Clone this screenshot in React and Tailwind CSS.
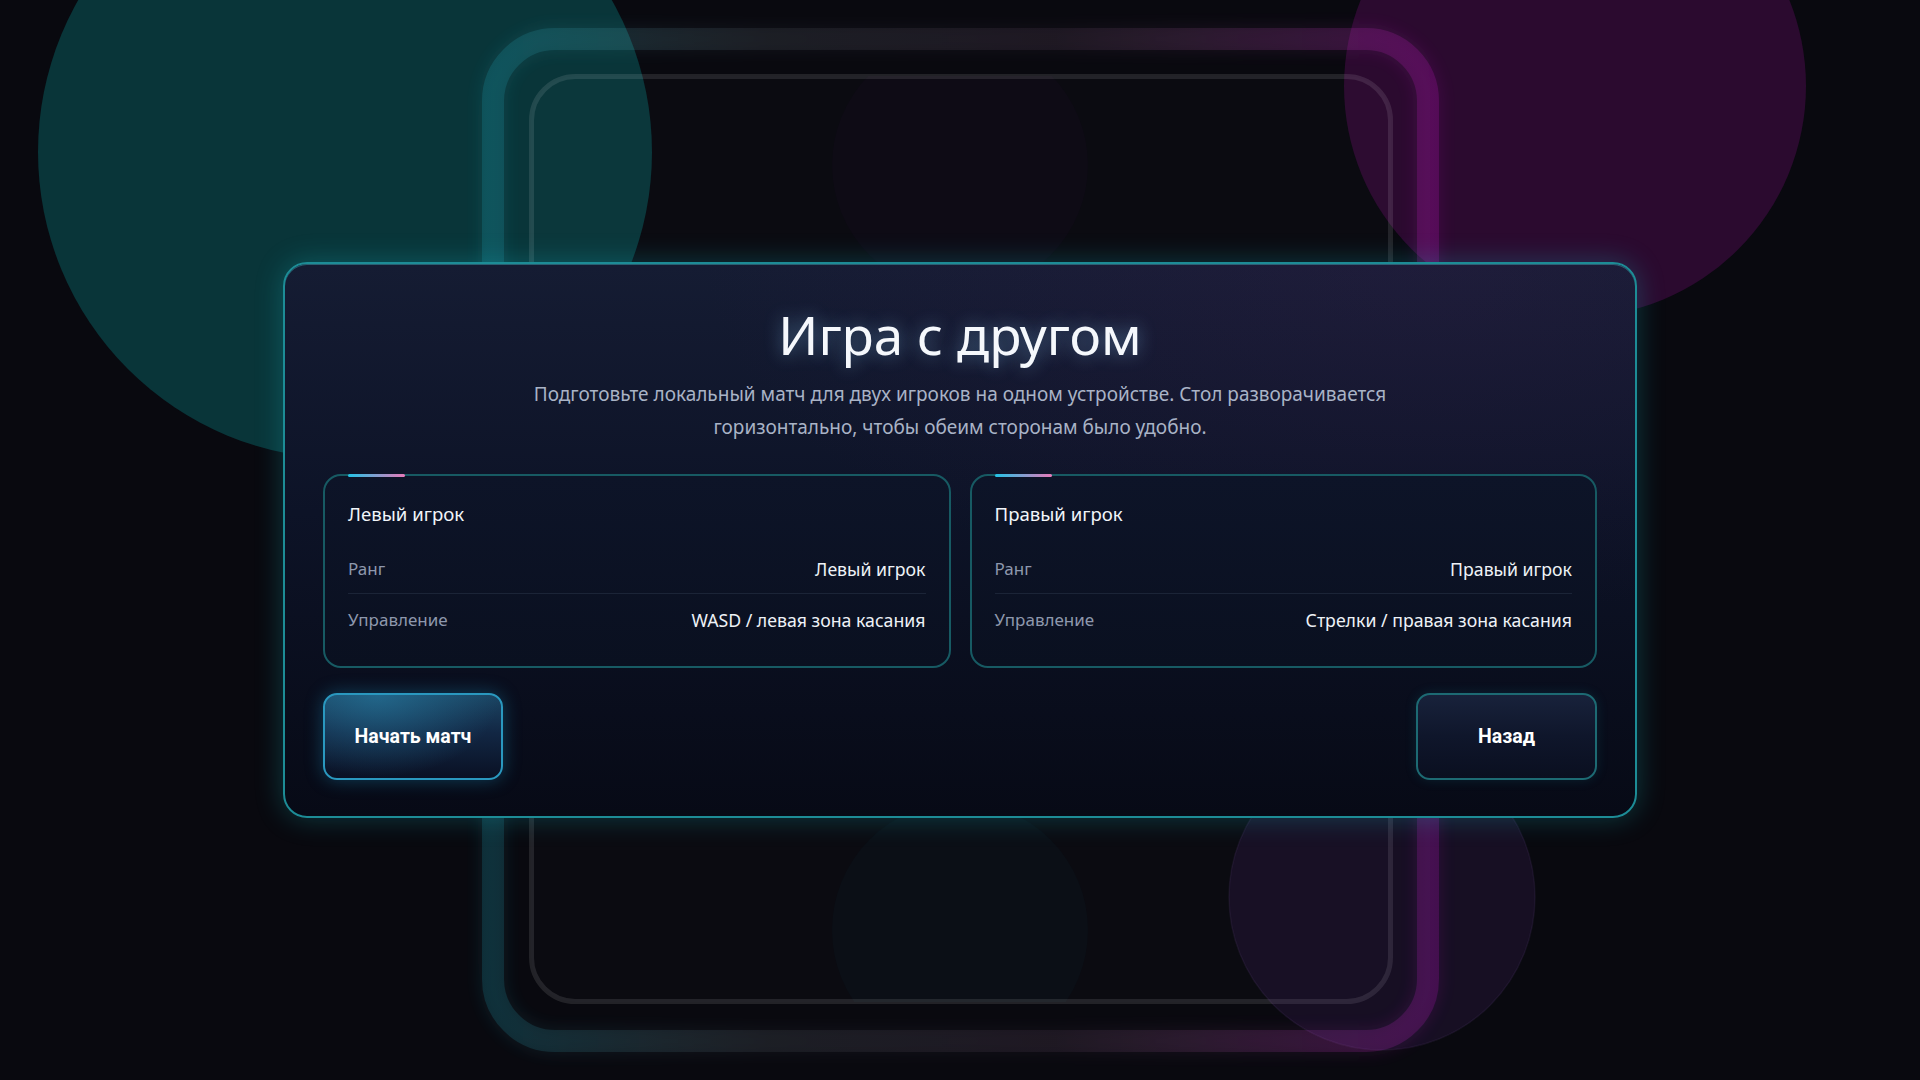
import React from "react";

function Backdrop() {
  return (
    <svg
      className="absolute inset-0 pointer-events-none"
      width="1920"
      height="1080"
      viewBox="0 0 1920 1080"
    >
      <defs>
        <linearGradient id="band" x1="482" y1="0" x2="1439" y2="0" gradientUnits="userSpaceOnUse">
          <stop offset="0" stopColor="rgb(34,211,238)" stopOpacity="0.14" />
          <stop offset="0.3" stopColor="rgb(200,220,230)" stopOpacity="0.07" />
          <stop offset="0.6" stopColor="rgb(220,160,210)" stopOpacity="0.07" />
          <stop offset="1" stopColor="rgb(200,20,200)" stopOpacity="0.2" />
        </linearGradient>
        <filter id="blur8" x="-20%" y="-20%" width="140%" height="140%">
          <feGaussianBlur stdDeviation="7" />
        </filter>
        <clipPath id="field">
          <rect x="531" y="76" width="860" height="926" rx="44" />
        </clipPath>
      </defs>

      <circle cx="345" cy="152" r="307" fill="#093539" />
      <circle cx="1575" cy="86" r="231" fill="#2b0a2f" />

      <rect x="493" y="39" width="935" height="1002" rx="62" fill="none" stroke="url(#band)" strokeWidth="30" filter="url(#blur8)" opacity="0.5" />
      <rect x="493" y="39" width="935" height="1002" rx="62" fill="none" stroke="url(#band)" strokeWidth="22" />

      <g clipPath="url(#field)">
        <rect x="531" y="76" width="860" height="926" fill="rgba(255,255,255,0.012)" />
        <circle cx="960" cy="165" r="128" fill="rgba(217,70,239,0.018)" />
        <circle cx="960" cy="930" r="128" fill="rgba(34,211,238,0.025)" />
      </g>
      <rect x="531.5" y="76.5" width="859" height="925" rx="44" fill="none" stroke="rgba(255,255,255,0.1)" strokeWidth="5" />

      <circle cx="1382" cy="897" r="153" fill="rgba(150,70,220,0.1)" stroke="rgba(200,140,255,0.07)" strokeWidth="1.5" />
    </svg>
  );
}

function PlayerCard({ title, rank, controls }) {
  return (
    <div className="relative flex-1 rounded-[18px] border-2 border-[#175a63] bg-[linear-gradient(180deg,#0d1428_0%,#0a1020_100%)] px-[23px] pt-[24px] pb-[22px]">
      <div className="absolute -top-[2px] left-[23px] h-[3px] w-[57px] rounded-full bg-[linear-gradient(90deg,#22c3e6,#e879b9)]" />
      <div className="text-[18.6px] leading-[28px] text-[#f1f5f9]">{title}</div>
      <div className="mt-[29px] flex flex-col gap-[14px]">
        <div className="flex items-center justify-between border-b border-[#1b2437] pb-[12px] leading-[24px]">
          <span className="text-[17px] text-[#8e98ad]">Ранг</span>
          <span className="text-[17.7px] text-[#eef2f7]">{rank}</span>
        </div>
        <div className="flex items-center justify-between pb-[12px] leading-[24px]">
          <span className="text-[17px] text-[#8e98ad]">Управление</span>
          <span className="text-[17.7px] text-[#eef2f7]">{controls}</span>
        </div>
      </div>
    </div>
  );
}

export default function App() {
  return (
    <div
      className="relative h-[1080px] w-[1920px] overflow-hidden bg-[#09090f]"
      style={{ fontFamily: '"Noto Sans", "Open Sans", sans-serif' }}
    >
      <Backdrop />
      <div className="relative z-10 flex h-full items-center justify-center">
        <div className="w-[1354px] rounded-[24px] border-2 border-[#1d8c96] bg-[radial-gradient(ellipse_at_85%_0%,rgba(60,30,80,0.25),transparent_45%),linear-gradient(180deg,#151c33_0%,#0d1327_45%,#070a16_100%)] px-[38px] pt-[38px] pb-[36px] shadow-[0_0_28px_rgba(20,190,200,0.28),inset_0_1px_0_rgba(80,220,230,0.35)]">
          <h1 className="text-center text-[53px] font-normal leading-[66px] text-[#f5f8fc] [text-shadow:0_0_18px_rgba(140,210,255,0.45)]">
            Игра с другом
          </h1>
          <p className="mx-auto mt-[10px] max-w-[960px] text-center text-[19px] leading-[33px] text-[#a9b3c6]">
            Подготовьте локальный матч для двух игроков на одном устройстве. Стол разворачивается
            горизонтально, чтобы обеим сторонам было удобно.
          </p>
          <div className="mt-[30px] flex gap-[19px]">
            <PlayerCard title="Левый игрок" rank="Левый игрок" controls="WASD / левая зона касания" />
            <PlayerCard title="Правый игрок" rank="Правый игрок" controls="Стрелки / правая зона касания" />
          </div>
          <div className="mt-[25px] flex items-center justify-between" style={{ fontFamily: 'Roboto, "Liberation Sans", sans-serif' }}>
            <button className="h-[87px] w-[180px] rounded-[14px] border-2 border-[#2a98bf] bg-[radial-gradient(ellipse_at_30%_0%,rgba(40,130,170,0.55),transparent_70%),linear-gradient(180deg,#1b4563_0%,#122744_45%,#0a1124_100%)] text-[19.5px] font-bold text-white shadow-[0_0_18px_rgba(30,160,210,0.35)]">
              Начать матч
            </button>
            <button className="h-[87px] w-[181px] rounded-[14px] border-2 border-[#1d6a73] bg-[linear-gradient(180deg,#18223b_0%,#0f162b_50%,#0a0f20_100%)] text-[19.5px] font-bold text-white shadow-[0_0_12px_rgba(20,120,140,0.2)]">
              Назад
            </button>
          </div>
        </div>
      </div>
    </div>
  );
}
